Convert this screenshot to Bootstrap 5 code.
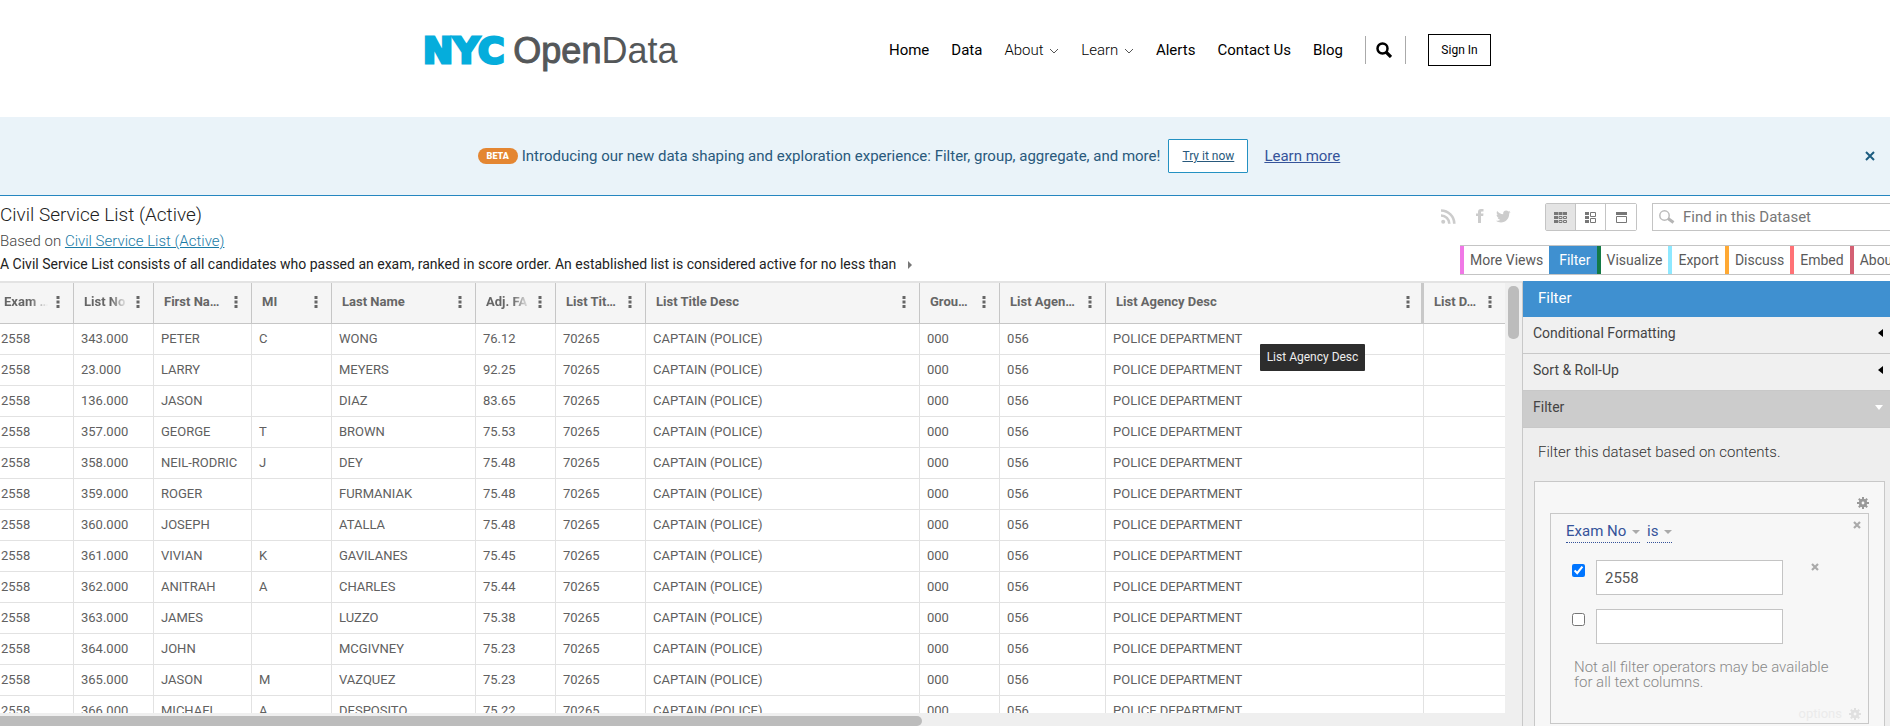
<!DOCTYPE html>
<html lang="en">
<head>
<meta charset="utf-8">
<meta name="viewport" content="width=device-width, initial-scale=1">
<title>Civil Service List (Active) | NYC Open Data</title>
<link href="https://cdn.jsdelivr.net/npm/bootstrap@5.3.0/dist/css/bootstrap.min.css" rel="stylesheet">
<style>
body{font-family:Roboto,"Liberation Sans",sans-serif;font-size:14px;line-height:20px;color:#333;background:#fff}
button{font-family:inherit}
/* site header */
.site-head{height:117px;flex:none}
.site-inner{width:1140px;max-width:100%;margin:0 auto;padding:34px 24px 0 49px}
.logo{font-family:"Liberation Sans",sans-serif;font-size:36px;line-height:34px;color:#545759;text-decoration:none}
.logo .nyc{font:bold 36px/34px "DejaVu Sans",sans-serif;color:#05addc;-webkit-text-stroke:3px #05addc;margin-left:-1px;margin-right:9px}
.logo .open{-webkit-text-stroke:1px #545759}
.site-nav{gap:22px;font-size:15px;line-height:32px;margin-bottom:2px}
.site-nav a{color:#000;text-decoration:none}
.site-nav a.sub{font-weight:300}
.site-nav a svg{margin-left:2px}
.find{border:0;border-left:1px solid #aaa;border-right:1px solid #aaa;background:none;width:41px;height:28px;padding:0 3px 0 0;line-height:0}
.signin{border:1px solid #000;background:#fff;width:63px;height:32px;font-size:12px;line-height:30px;padding:0}
/* beta banner */
.beta{flex:none;height:79px;background:#eaf3f9;border-bottom:1px solid #2586c0;color:#29597c;font-size:15px;padding-right:72px}
.beta .pill{background:#e48632;color:#fff;font-size:9px;font-weight:900;line-height:16px;width:40px;border-radius:8px;text-align:center;margin-right:4px}
.try{border:1px solid #2491c2;background:#fff;color:#29597c;width:80px;height:34px;font-size:12px;text-decoration:underline;margin:0 16px 0 8px;padding:0;border-radius:1px}
.beta a{color:#35539a}
.close-x{right:15px;top:33px;border:0;background:none;padding:0;line-height:0}
/* title strip */
.strip{flex:none;height:85px}
.strip h1{font-size:19px;line-height:24px;font-weight:300;margin:7px 0 4px;color:#222}
.based{font-size:15px;line-height:20px;font-weight:300;margin-bottom:4px;color:#444}
.based a{color:#1b7ba6}
.desc{color:#222;line-height:18px}
.tools{width:430px;flex:none;padding-top:7px}
.share{padding-left:41px;width:145px;gap:12px;margin-left:-60px}
.modes{border:1px solid #c4c4c4;border-radius:2px}
.modes button{width:30px;height:26px;border:0;border-right:1px solid #c4c4c4;background:#fff;padding:0;line-height:0}
.modes button.on{background:#e4e4e4}
.modes button:last-child{border-right:0}
.seek{border:1px solid #c4c4c4;border-right:0;height:28px;margin-left:15px;padding-left:6px}
.seek input{border:0;outline:0;font-size:15px;padding:0 0 0 8px;width:100%;min-width:0;color:#666}
.seek input::placeholder{color:#777;opacity:1}
.tabs{border-top:1px solid #c4c4c4;border-bottom:1px solid #c4c4c4;height:30px;margin-top:14px;overflow:hidden}
.tabs a{border-left:4px solid;padding:0 6px;line-height:28px;text-decoration:none;white-space:nowrap}
.tabs a span{color:#5a5a5a}
.tabs a.cur{background:#3f90d0}
.tabs a.cur span{color:#fff}
/* grid */
.work{min-height:0}
.gridbox{min-width:0;border-top:2px solid #e3e3e3;background:#efefef;border-right:1px solid #c8c8c8}
.gridview{min-width:0;overflow:hidden;background:#fff}
.data{table-layout:fixed;width:calc(100% + 6px);margin:0 0 0 -6px;border-collapse:separate;border-spacing:0;color:#606060;font-size:13px}
.data th{height:41px;background:#f5f5f5;border-right:1px solid #c6c6c6;border-bottom:1px solid #c6c6c6;padding:0 13px 2px 10px;font-weight:700;color:#666;vertical-align:middle}
.data td{height:31px;border-right:1px solid #e2e2e2;border-bottom:1px solid #e2e2e2;padding:0 0 0 7px;line-height:30px;white-space:nowrap}
.data th:last-child,.data td:last-child{border-right:0}
.data th.grip{border-right:3px solid #c8c8c8;padding-right:11px}
.data th .name{overflow:hidden;white-space:nowrap;width:100%}
.data th .fade-out{-webkit-mask-image:linear-gradient(90deg,#000 60%,transparent)}
.data th svg{flex:none;margin-left:8px}
.vbar{width:17px;flex:none;padding:3px 3px 0}
.vbar div{height:53px;border-radius:5px;background:#bcbcbc}
.hbar{height:13px;flex:none;padding-top:3px}
.hbar div{height:10px;width:60.6%;border-radius:0 5px 5px 0;background:#bcbcbc}
.tip{left:1260px;top:63px;background:#2d2d2d;color:#eee;font-size:12px;line-height:27px;width:105px;text-align:center;border-radius:1px}
/* side pane */
.side{width:367px;flex:none;background:#eee;overflow:hidden}
.side h2{background:#3f90d0;color:#fff;font-size:15px;line-height:34px;height:36px;font-weight:400;margin:0;padding-left:15px}
.acc{border:0;border-bottom:1px solid #c8c8c8;background:#f0f0f0;height:37px;width:100%;padding:0 7px 4px 10px;font-size:14px;color:#444;text-align:left}
.acc.open{background:#ccc}
.intro{font-size:15px;font-weight:300;margin:14px 0 19px 15px}
.outer{border:1px solid #c8c8c8;background:#f7f7f7;margin:0 5px 0 11px;padding:13px 15px 40px}
.inner{border:1px solid #c8c8c8;height:211px;margin-top:4px;padding:7px 7px 0 15px}
.ico-btn{border:0;background:none;padding:0;line-height:0}
.pick{border:0;border-bottom:1px dotted #35539a;background:none;color:#35539a;font-size:15px;line-height:20px;padding:0 0 1px;margin-right:7px}
.pick svg{margin-left:2px;vertical-align:2px}
.rowx{padding-left:6px;margin-top:14px;height:35px}
.pick-line{margin-bottom:17px}
.pick-line + .rowx{margin-top:0}
.rowx .ico-btn{margin:3px 42px 0 auto}
.rowx input[type=checkbox]{width:13px;height:13px;margin:4px 11px 0 0}
.rowx input[type=text]{width:187px;height:35px;border:1px solid #c4c4c4;border-radius:0;padding:0 8px;font-size:15px;color:#555;background:#fff}
.note{font-size:15px;font-weight:300;line-height:15px;color:#888;margin:16px 0 0 8px}
.opts{color:#ebebeb;margin-top:16px;font-size:13px;line-height:16px;gap:7px}
</style>
</head>
<body class="vh-100 d-flex flex-column overflow-hidden">
<svg width="0" height="0" class="position-absolute">
<symbol id="gear" viewBox="0 0 12 12"><path fill="none" stroke="currentColor" stroke-width="2" d="M6 0v12M0 6h12M1.8 1.8l8.4 8.4M10.2 1.8l-8.4 8.4"/><circle cx="6" cy="6" r="2.8" fill="#f7f7f7" stroke="currentColor" stroke-width="2.8"/></symbol>
<symbol id="cross" viewBox="0 0 8 8"><path d="M1 1l6 6M7 1l-6 6" stroke="currentColor" stroke-width="2.2"/></symbol>
<symbol id="dots" viewBox="0 0 4 12"><path fill="#666" d="M.5 0h3v3h-3zM.5 4.500h3v3h-3zM.5 9h3v3h-3z"/></symbol>
<symbol id="chev" viewBox="0 0 10 6"><path d="M1 1l4 4 4-4" fill="none" stroke="#555"/></symbol>
</svg>

<header class="site-head">
<div class="site-inner d-flex justify-content-between">
<a href="#" class="logo d-flex"><span class="nyc">NYC</span><span class="open">Open</span><span>Data</span></a>
<nav class="site-nav d-flex align-items-center">
<a href="#">Home</a><a href="#">Data</a>
<a href="#" class="sub">About <svg width="10" height="6"><use href="#chev"/></svg></a>
<a href="#" class="sub">Learn <svg width="10" height="6"><use href="#chev"/></svg></a>
<a href="#">Alerts</a><a href="#">Contact Us</a><a href="#">Blog</a>
<button class="find" aria-label="Search"><svg width="16" height="16" viewBox="0 0 16 16"><circle cx="6.500" cy="6.500" r="5" fill="none" stroke="#000" stroke-width="2.500"/><path d="M10 10l5 5" stroke="#000" stroke-width="3.200"/></svg></button>
<button class="signin">Sign In</button>
</nav>
</div>
</header>

<section class="beta position-relative d-flex align-items-center justify-content-center">
<span class="pill">BETA</span><span>Introducing our new data shaping and exploration experience: Filter, group, aggregate, and more!</span>
<button class="try">Try it now</button><a href="#">Learn more</a>
<button class="close-x position-absolute" aria-label="Close"><svg width="10" height="12" viewBox="0 0 10 12"><path d="M1 2l8 8M9 2l-8 8" stroke="#1d5c80" stroke-width="2"/></svg></button>
</section>

<section class="strip d-flex justify-content-between">
<div>
<h1>Civil Service List (Active)</h1>
<div class="based">Based on <a href="#">Civil Service List (Active)</a></div>
<div class="desc">A Civil Service List consists of all candidates who passed an exam, ranked in score order. An established list is considered active for no less than <svg class="ms-2" width="4" height="8" viewBox="0 0 4 8"><path d="M0 0l4 4-4 4z" fill="#777"/></svg></div>
</div>
<div class="tools">
<div class="d-flex align-items-center">
<div class="share d-flex align-items-center pb-1">
<a href="#" aria-label="RSS"><svg width="15" height="15" viewBox="0 0 15 15" fill="none" stroke="#ccc" stroke-width="2.600"><circle cx="2.200" cy="12.800" r="2" fill="#ccc" stroke="none"/><path d="M0 6.500a8.300 8.300 0 0 1 8.300 8.300M0 1.500a13.300 13.300 0 0 1 13.300 13.300"/></svg></a>
<a href="#" class="ms-2" aria-label="Facebook"><svg width="8" height="14" viewBox="0 0 8 14"><path fill="#ccc" d="M2 14V7H0V4.500h2V3c0-2 1-3 3-3h2.500v2.400H6C5.200 2.400 5 2.700 5 3.400v1.100h2.500L7.200 7H5v7z"/></svg></a>
<a href="#" aria-label="Twitter"><svg width="15" height="13" viewBox="0 0 15 13"><path fill="#ccc" d="M0 10.800c2 .2 3.300-.3 4.300-1.100-1.400-.1-2.300-.9-2.700-2h1.200C1.300 7.200.6 6.100.6 4.700l1.200.3C.6 4 .4 2.400 1.100 1c1.600 2 3.600 3 6.100 3.200C6.800 2 8.200.4 10.200.4c.9 0 1.600.3 2.200 1L14.200.7l-1.200 1.700 1.700-.4-1.500 1.600c.2 5-3.400 8.900-8.200 8.900-2 0-3.700-.6-5-1.700z"/></svg></a>
</div>
<div class="modes d-flex">
<button class="on" aria-label="Table"><svg width="13" height="11" viewBox="0 0 13 11"><path fill="#777" d="M0 0h4v3H0zM4.500 0h4v3h-4zM9 0h4v3H9zM0 4h4v3H0zM0 8h4v3H0z"/><path fill="none" stroke="#777" d="M5 4.500h3v2H5zM9.500 4.500h3v2h-3zM5 8.500h3v2H5zM9.500 8.500h3v2h-3z"/></svg></button><button aria-label="List"><svg width="11" height="11" viewBox="0 0 11 11"><path fill="#777" d="M0 0h4v3H0zM0 4h4v3H0zM0 8h4v3H0z"/><path fill="none" stroke="#777" d="M5.500.5h5v4h-5zM5.500 6.500h5v4h-5z"/></svg></button><button aria-label="Page"><svg width="11" height="11" viewBox="0 0 11 11"><path fill="#777" d="M0 0h11v3H0z"/><path fill="none" stroke="#777" d="M.5 4.500h10v6H.5z"/></svg></button>
</div>
<label class="seek d-flex align-items-center flex-fill"><svg class="flex-shrink-0" width="16" height="14" viewBox="0 0 16 14"><circle cx="5.500" cy="5.500" r="4.700" fill="none" stroke="#bbb" stroke-width="1.500"/><path d="M9 8.500l5.500 4" stroke="#b5b5b5" stroke-width="3"/></svg><input type="text" placeholder="Find in this Dataset" aria-label="Find in this Dataset"></label>
</div>
<nav class="tabs d-flex">
<a href="#" style="border-color:#f078e6"><span>More Views</span></a><a href="#" class="cur" style="border-color:#3f90d0"><span>Filter</span></a><a href="#" style="border-color:#137a46"><span>Visualize</span></a><a href="#" style="border-color:#8ee8ff"><span>Export</span></a><a href="#" style="border-color:#ffa933"><span>Discuss</span></a><a href="#" style="border-color:#ff7276"><span>Embed</span></a><a href="#" style="border-color:#d46073"><span>About</span></a>
</nav>
</div>
</section>

<main class="work d-flex flex-fill position-relative">
<section class="gridbox d-flex flex-column flex-fill">
<div class="d-flex flex-fill work">
<div class="gridview flex-fill">
<table class="data">
<colgroup id="cols"></colgroup>
<thead><tr id="heads"></tr></thead>
<tbody id="rows"></tbody>
</table>
</div>
<div class="vbar"><div></div></div>
</div>
<div class="hbar"><div></div></div>
</section>
<div class="tip position-absolute">List Agency Desc</div>

<aside class="side">
<h2>Filter</h2>
<button class="acc d-flex align-items-center justify-content-between">Conditional Formatting <svg width="5" height="8"><path d="M5 0v8L0 4z"/></svg></button>
<button class="acc d-flex align-items-center justify-content-between">Sort &amp; Roll-Up <svg width="5" height="8"><path d="M5 0v8L0 4z"/></svg></button>
<button class="acc open d-flex align-items-center justify-content-between">Filter <svg width="8" height="5"><path d="M0 0h8L4 5z" fill="#fff"/></svg></button>
<p class="intro">Filter this dataset based on contents.</p>
<div class="outer">
<div class="text-end lh-1"><button class="ico-btn" aria-label="Settings" style="color:#999"><svg width="12" height="12"><use href="#gear"/></svg></button></div>
<div class="inner">
<div class="pick-line d-flex align-items-start">
<button class="pick">Exam No <svg width="8" height="4"><path d="M0 0h8L4 4z" fill="#aaa"/></svg></button>
<button class="pick">is <svg width="8" height="4"><path d="M0 0h8L4 4z" fill="#aaa"/></svg></button>
<button class="ico-btn ms-auto" aria-label="Remove condition" style="color:#aaa"><svg width="8" height="8"><use href="#cross"/></svg></button>
</div>
<div class="rowx d-flex align-items-start"><input type="checkbox" checked aria-label="Use 2558"><input type="text" value="2558" aria-label="Value"><button class="ico-btn" aria-label="Remove value" style="color:#aaa"><svg width="8" height="8"><use href="#cross"/></svg></button></div>
<div class="rowx d-flex align-items-start"><input type="checkbox" aria-label="Use new value"><input type="text" aria-label="New value"></div>
<p class="note">Not all filter operators may be available<br>for all text columns.</p>
<div class="opts d-flex align-items-center justify-content-end">options <svg width="12" height="12" color="#e0e0e0"><use href="#gear"/></svg></div>
</div>
</div>
</aside>
</main>

<script>
const columns = [["Exam …",80,1],["List No",80,1],["First Na…",98],["MI",80],["Last Name",144],["Adj. FA",80,1],["List Tit…",90],["List Title Desc",274],["Grou…",80],["List Agen…",106],["List Agency Desc",318],["List D…",0]];
const people = [
["343.000","PETER","C","WONG","76.12"],["23.000","LARRY","","MEYERS","92.25"],["136.000","JASON","","DIAZ","83.65"],
["357.000","GEORGE","T","BROWN","75.53"],["358.000","NEIL-RODRIC","J","DEY","75.48"],["359.000","ROGER","","FURMANIAK","75.48"],
["360.000","JOSEPH","","ATALLA","75.48"],["361.000","VIVIAN","K","GAVILANES","75.45"],["362.000","ANITRAH","A","CHARLES","75.44"],
["363.000","JAMES","","LUZZO","75.38"],["364.000","JOHN","","MCGIVNEY","75.23"],["365.000","JASON","M","VAZQUEZ","75.23"],["366.000","MICHAEL","A","DESPOSITO","75.22"]];
document.getElementById("cols").innerHTML = columns.map(c => c[1] ? `<col style="width:${c[1]}px">` : "<col>").join("");
document.getElementById("heads").innerHTML = columns.map((c, i) => `<th${i === 10 ? ' class="grip"' : ""}><div class="d-flex align-items-center"><span class="name${c[2] ? " fade-out" : ""}">${c[0]}</span><svg width="4" height="12"><use href="#dots"/></svg></div></th>`).join("");
document.getElementById("rows").innerHTML = people.map(p => "<tr>" + ["2558", ...p, "70265", "CAPTAIN (POLICE)", "000", "056", "POLICE DEPARTMENT", ""].map(v => `<td>${v}</td>`).join("") + "</tr>").join("");
</script>
<script src="https://cdn.jsdelivr.net/npm/bootstrap@5.3.0/dist/js/bootstrap.bundle.min.js"></script>
</body>
</html>
